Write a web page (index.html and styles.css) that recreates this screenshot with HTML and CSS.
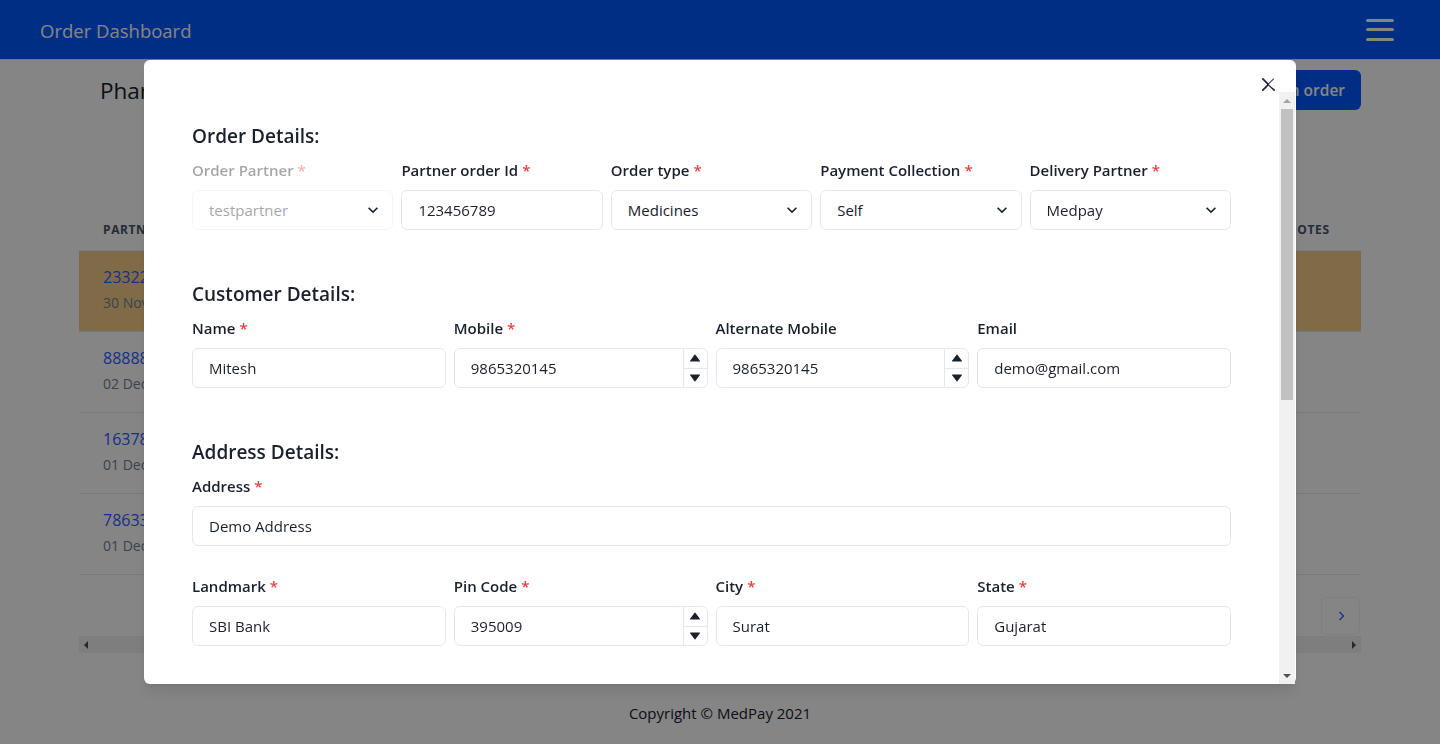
FILE: index.html
```html
<!DOCTYPE html>
<html lang="en">
<head>
<meta charset="utf-8">
<title>Order Dashboard</title>
<link rel="stylesheet" href="styles.css">
</head>
<body>
<header class="navbar">
  <span class="brand">Order Dashboard</span>
  <button class="burger" aria-label="Menu"><span></span><span></span><span></span></button>
</header>

<main class="page">
  <div class="page-head">
    <h1 class="page-title">Pharmacy Orders</h1>
    <button class="btn-primary">Create an order</button>
  </div>

  <div class="table-wrap">
    <table class="orders">
      <thead>
        <tr>
          <th>Partner Order ID</th>
          <th>Customer</th>
          <th>Pharmacy</th>
          <th>Status</th>
          <th>Delivery</th>
          <th>Amount</th>
          <th class="col-notes">Notes</th>
        </tr>
      </thead>
      <tbody>
        <tr class="hl">
          <td><span class="order-id">233221</span><span class="order-date">30 Nov 2021</span></td>
          <td>Mitesh</td><td>Medpay</td><td>Pending</td><td>Self</td><td>₹ 540</td><td></td>
        </tr>
        <tr>
          <td><span class="order-id">888888</span><span class="order-date">02 Dec 2021</span></td>
          <td>Rahul</td><td>Medpay</td><td>Delivered</td><td>Medpay</td><td>₹ 210</td><td></td>
        </tr>
        <tr>
          <td><span class="order-id">163789</span><span class="order-date">01 Dec 2021</span></td>
          <td>Priya</td><td>Medpay</td><td>Delivered</td><td>Medpay</td><td>₹ 980</td><td></td>
        </tr>
        <tr>
          <td><span class="order-id">786334</span><span class="order-date">01 Dec 2021</span></td>
          <td>Amit</td><td>Medpay</td><td>Cancelled</td><td>Self</td><td>₹ 120</td><td></td>
        </tr>
      </tbody>
    </table>
    <div class="pager">
      <button class="page-btn" aria-label="Next page">
        <svg width="10" height="14" viewBox="0 0 10 14"><path d="M3.5 3l4 4-4 4" fill="none" stroke="#3b6cff" stroke-width="1.5"/></svg>
      </button>
    </div>
    <div class="hscroll"><span class="arr-left"></span><span class="arr-right"></span></div>
  </div>
</main>

<footer class="footer">Copyright © MedPay 2021</footer>

<div class="overlay"></div>

<div class="modal-layer">
  <section class="modal">
    <button class="modal-close" aria-label="Close">
      <svg width="13" height="13" viewBox="0 0 24 24"><path fill="#1a202c" d="M.439,21.44a1.5,1.5,0,0,0,2.122,2.121L11.823,14.3a.25.25,0,0,1,.354,0l9.262,9.263a1.5,1.5,0,1,0,2.122-2.121L12.3,12.177a.25.25,0,0,1,0-.354l9.263-9.262A1.5,1.5,0,0,0,21.439.44L12.177,9.7a.25.25,0,0,1-.354,0L2.561.44A1.5,1.5,0,0,0,.439,2.561L9.7,11.823a.25.25,0,0,1,0,.354Z"/></svg>
    </button>
    <div class="modal-main">
      <div class="modal-body">

        <div class="section">
          <h2 class="section-title">Order Details:</h2>
          <div class="grid grid-5">
            <div class="ctl">
              <label class="label disabled">Order Partner<span class="req">*</span></label>
              <div class="select-wrap">
                <select class="field select is-disabled" disabled><option>testpartner</option></select>
                <svg class="chev" viewBox="0 0 24 24"><path fill="currentColor" d="M16.59 8.59L12 13.17 7.41 8.59 6 10l6 6 6-6z"/></svg>
              </div>
            </div>
            <div class="ctl">
              <label class="label">Partner order Id<span class="req">*</span></label>
              <input class="field" type="text" value="123456789">
            </div>
            <div class="ctl">
              <label class="label">Order type<span class="req">*</span></label>
              <div class="select-wrap">
                <select class="field select"><option>Medicines</option></select>
                <svg class="chev" viewBox="0 0 24 24"><path fill="currentColor" d="M16.59 8.59L12 13.17 7.41 8.59 6 10l6 6 6-6z"/></svg>
              </div>
            </div>
            <div class="ctl">
              <label class="label">Payment Collection<span class="req">*</span></label>
              <div class="select-wrap">
                <select class="field select"><option>Self</option></select>
                <svg class="chev" viewBox="0 0 24 24"><path fill="currentColor" d="M16.59 8.59L12 13.17 7.41 8.59 6 10l6 6 6-6z"/></svg>
              </div>
            </div>
            <div class="ctl">
              <label class="label">Delivery Partner<span class="req">*</span></label>
              <div class="select-wrap">
                <select class="field select"><option>Medpay</option></select>
                <svg class="chev" viewBox="0 0 24 24"><path fill="currentColor" d="M16.59 8.59L12 13.17 7.41 8.59 6 10l6 6 6-6z"/></svg>
              </div>
            </div>
          </div>
        </div>

        <div class="section">
          <h2 class="section-title">Customer Details:</h2>
          <div class="grid grid-4">
            <div class="ctl">
              <label class="label">Name<span class="req">*</span></label>
              <input class="field" type="text" value="Mitesh">
            </div>
            <div class="ctl">
              <label class="label">Mobile<span class="req">*</span></label>
              <div class="num">
                <input type="text" inputmode="numeric" value="9865320145">
                <div class="stepper">
                  <span class="step"><svg viewBox="0 0 24 24"><path d="M21,19H3a1,1,0,0,1-.8-1.6l9-12a1,1,0,0,1,1.6,0l9,12A1,1,0,0,1,21,19Z"/></svg></span>
                  <span class="step"><svg viewBox="0 0 24 24"><path d="M21,5H3a1,1,0,0,0-.8,1.6l9,12a1,1,0,0,0,1.6,0l9-12A1,1,0,0,0,21,5Z"/></svg></span>
                </div>
              </div>
            </div>
            <div class="ctl">
              <label class="label">Alternate Mobile</label>
              <div class="num">
                <input type="text" inputmode="numeric" value="9865320145">
                <div class="stepper">
                  <span class="step"><svg viewBox="0 0 24 24"><path d="M21,19H3a1,1,0,0,1-.8-1.6l9-12a1,1,0,0,1,1.6,0l9,12A1,1,0,0,1,21,19Z"/></svg></span>
                  <span class="step"><svg viewBox="0 0 24 24"><path d="M21,5H3a1,1,0,0,0-.8,1.6l9,12a1,1,0,0,0,1.6,0l9-12A1,1,0,0,0,21,5Z"/></svg></span>
                </div>
              </div>
            </div>
            <div class="ctl">
              <label class="label">Email</label>
              <input class="field" type="text" value="demo@gmail.com">
            </div>
          </div>
        </div>

        <div class="section">
          <h2 class="section-title">Address Details:</h2>
          <div class="ctl">
            <label class="label">Address<span class="req">*</span></label>
            <input class="field" type="text" value="Demo Address">
          </div>
          <div class="grid grid-4 row">
            <div class="ctl">
              <label class="label">Landmark<span class="req">*</span></label>
              <input class="field" type="text" value="SBI Bank">
            </div>
            <div class="ctl">
              <label class="label">Pin Code<span class="req">*</span></label>
              <div class="num">
                <input type="text" inputmode="numeric" value="395009">
                <div class="stepper">
                  <span class="step"><svg viewBox="0 0 24 24"><path d="M21,19H3a1,1,0,0,1-.8-1.6l9-12a1,1,0,0,1,1.6,0l9,12A1,1,0,0,1,21,19Z"/></svg></span>
                  <span class="step"><svg viewBox="0 0 24 24"><path d="M21,5H3a1,1,0,0,0-.8,1.6l9,12a1,1,0,0,0,1.6,0l9-12A1,1,0,0,0,21,5Z"/></svg></span>
                </div>
              </div>
            </div>
            <div class="ctl">
              <label class="label">City<span class="req">*</span></label>
              <input class="field" type="text" value="Surat">
            </div>
            <div class="ctl">
              <label class="label">State<span class="req">*</span></label>
              <input class="field" type="text" value="Gujarat">
            </div>
          </div>
        </div>

      </div>
      <div class="vscroll" aria-hidden="true">
        <span class="vs-btn"><span class="tri-up"></span></span>
        <span class="vs-thumb"></span>
        <span class="vs-track"></span>
        <span class="vs-btn"><span class="tri-down"></span></span>
      </div>
    </div>
  </section>
</div>
</body>
</html>
```

FILE: styles.css
```css
* { box-sizing: border-box; }
html, body { margin: 0; }
body {
  font-family: "Open Sans", "Noto Sans", sans-serif;
  color: #1a202c;
  background: #ffffff;
  height: 744px;
  overflow: hidden;
}
button { font-family: inherit; cursor: pointer; }

/* navbar */
.navbar {
  height: 60px;
  background: #0059ff;
  border-bottom: 1px solid #e2e8f0;
  display: flex;
  align-items: center;
  justify-content: space-between;
  padding: 0 40px;
}
.brand { color: #ffffff; font-size: 18.5px; padding-top: 1px; }
.burger {
  width: 40px; height: 40px;
  display: flex; flex-direction: column; align-items: center; justify-content: center;
  gap: 6.5px;
  background: none; border: 0; padding: 0;
}
.burger span { display: block; width: 28px; height: 3px; border-radius: 2px; background: #ffffff; }

/* page */
.page { padding: 10px 79px 0; }
.page-head {
  display: flex; align-items: center; justify-content: space-between;
  height: 40px; padding-left: 21px;
}
.page-title { margin: 0; font-size: 22.5px; font-weight: 400; }
.btn-primary {
  height: 40px; padding: 0 16px;
  background: #0059ff; color: #ffffff;
  border: 0; border-radius: 6px;
  font-size: 15.5px; font-weight: 600;
}
.table-wrap { margin-top: 100px; }
.orders { width: 100%; border-collapse: collapse; }
.orders th {
  text-align: left;
  font-size: 12px; font-weight: 700; letter-spacing: 0.05em; text-transform: uppercase;
  color: #4a5568;
  padding: 12px 24px; line-height: 16px;
  border-bottom: 1px solid #edf2f7;
}
.orders th.col-notes { width: 98px; }
.orders td {
  padding: 16px 24px;
  border-bottom: 1px solid #e2e8f0;
  vertical-align: top;
  font-size: 15px; line-height: 20px;
}
.orders tr.hl td { background: #f6ce8a; }
.order-id { display: block; color: #2b5cff; font-size: 16px; line-height: 20px; }
.order-date { display: block; color: #718096; font-size: 14px; line-height: 24px; margin-top: 4px; }
.pager { display: flex; justify-content: flex-end; padding: 22px 1px 1px 0; }
.page-btn {
  width: 39px; height: 38px;
  display: flex; align-items: center; justify-content: center;
  background: transparent; border: 1px solid #edf2f7; border-radius: 6px; padding: 0;
}
.hscroll {
  height: 17px; background: #f1f1f1;
  display: flex; align-items: center; justify-content: space-between;
  padding: 0 5px;
}
.arr-left { width: 0; height: 0; border-top: 4px solid transparent; border-bottom: 4px solid transparent; border-right: 4px solid #505050; }
.arr-right { width: 0; height: 0; border-top: 4px solid transparent; border-bottom: 4px solid transparent; border-left: 4px solid #505050; }
.footer { margin-top: 48px; text-align: center; font-size: 15px; line-height: 24px; }

/* modal */
.overlay { position: fixed; inset: 0; background: rgba(0, 0, 0, 0.48); }
.modal-layer {
  position: fixed; inset: 0;
  display: flex; justify-content: center; align-items: flex-start;
  padding-top: 60px;
}
.modal {
  position: relative;
  width: 1152px;
  background: #ffffff;
  border-radius: 6px;
  padding: 32px 1px 0 0;
  box-shadow: 0 10px 15px -3px rgba(0,0,0,0.1), 0 4px 6px -2px rgba(0,0,0,0.05);
}
.modal-close {
  position: absolute; top: 8px; right: 12px;
  width: 32px; height: 32px;
  display: flex; align-items: center; justify-content: center;
  background: none; border: 0; padding: 0; border-radius: 6px;
}
.modal-main { display: flex; height: 592px; }
.modal-body {
  flex: 1; min-width: 0;
  overflow: hidden;
  padding: 30px 48px 0;
}
.vscroll { width: 16px; display: flex; flex-direction: column; background: #f1f1f1; }
.vs-btn { height: 17px; display: flex; align-items: center; justify-content: center; }
.tri-up { width: 0; height: 0; border-left: 4px solid transparent; border-right: 4px solid transparent; border-bottom: 4px solid #a3a3a3; }
.tri-down { width: 0; height: 0; border-left: 4px solid transparent; border-right: 4px solid transparent; border-top: 4px solid #505050; }
.vs-thumb { height: 291px; margin: 0 2px; background: #c1c1c1; }
.vs-track { flex: 1; }

/* form */
.section + .section { margin-top: 50px; }
.section-title { margin: 0 0 8px; font-size: 19px; font-weight: 600; line-height: 28px; color: #1a202c; }
.grid { display: grid; gap: 8px; }
.grid-5 { grid-template-columns: repeat(5, 1fr); }
.grid-4 { grid-template-columns: repeat(4, 1fr); }
.row { margin-top: 28px; }
.ctl { min-width: 0; }
.label {
  display: block;
  font-size: 15px; font-weight: 600; line-height: 24px;
  margin-bottom: 8px;
  color: #1a202c;
}
.label.disabled { opacity: 0.4; }
.req { color: #e53e3e; margin-left: 4px; }
.field {
  display: block;
  width: 100%; height: 40px;
  border: 1px solid #e2e8f0; border-radius: 6px;
  padding: 0 16px;
  font-family: inherit; font-size: 15px; color: #1a202c;
  background: #ffffff;
  outline: none;
}
.select-wrap { position: relative; }
.select { appearance: none; -webkit-appearance: none; padding-right: 32px; }
.select.is-disabled { opacity: 0.4; }
.chev {
  position: absolute; right: 8px; top: 50%;
  width: 24px; height: 20px; margin-top: -10px;
  color: #1a202c; pointer-events: none;
}
.num {
  display: flex; height: 40px;
  border: 1px solid #e2e8f0; border-radius: 6px;
  overflow: hidden;
}
.num input {
  flex: 1; min-width: 0;
  border: 0; outline: none; background: transparent;
  padding: 0 16px;
  font-family: inherit; font-size: 15px; color: #1a202c;
}
.stepper { width: 24px; display: flex; flex-direction: column; border-left: 1px solid #e2e8f0; }
.step { flex: 1; display: flex; align-items: center; justify-content: center; }
.step + .step { border-top: 1px solid #e2e8f0; }
.step svg { width: 12px; height: 12px; fill: #1a202c; }
```
